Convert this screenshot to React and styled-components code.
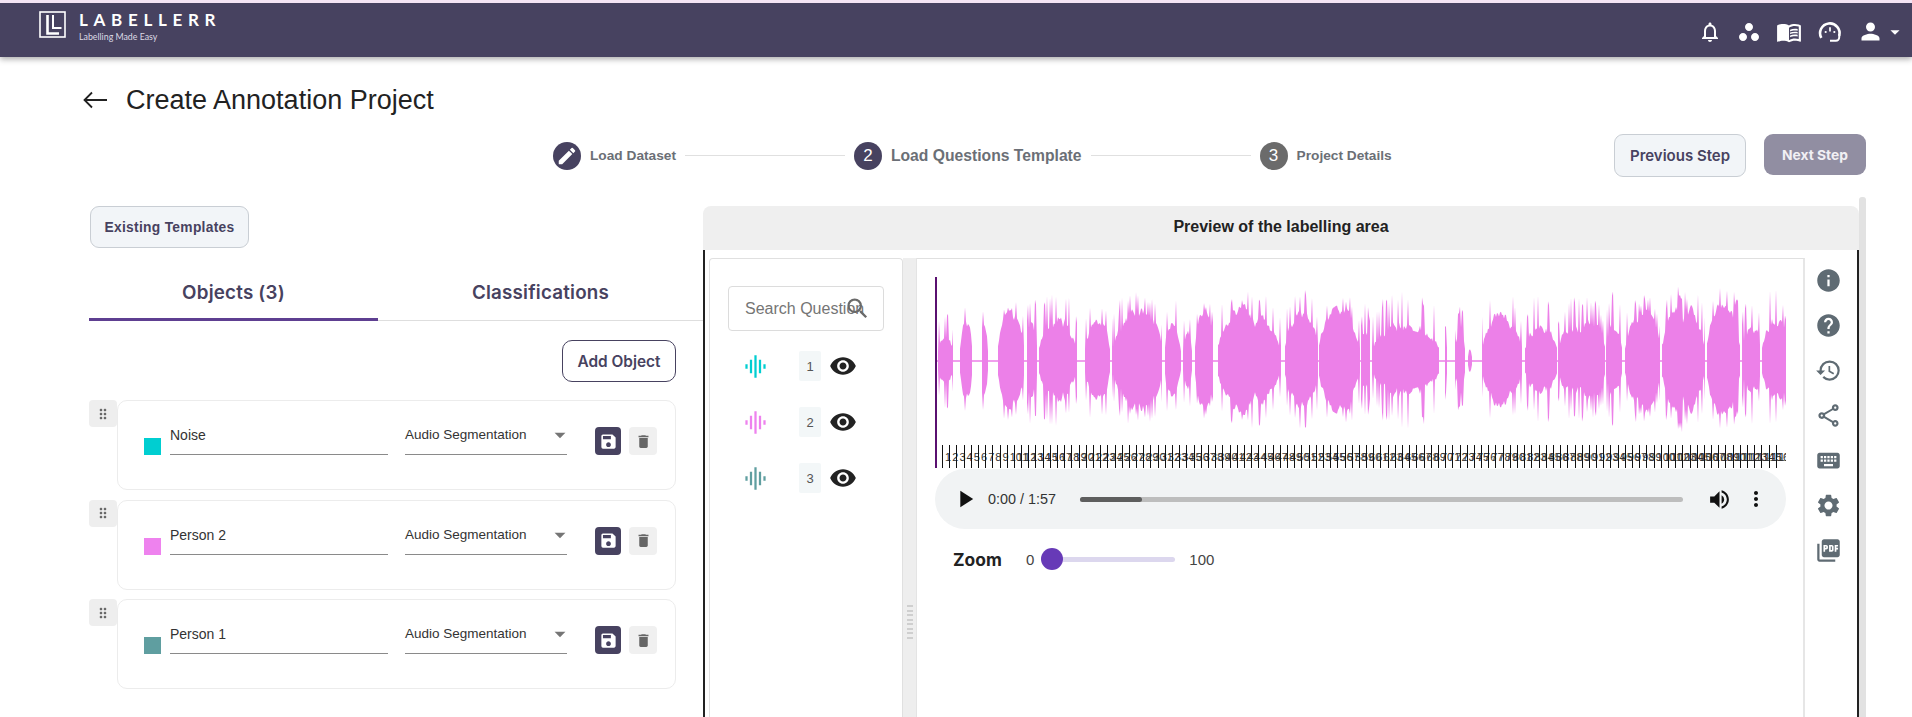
import React from 'react';
import styled, { createGlobalStyle } from 'styled-components';
import {
  MdArrowDropDown, MdDelete, MdDragIndicator, MdEdit, MdGraphicEq, MdHelp, MdHistory, MdInfo,
  MdKeyboard, MdMenuBook, MdMoreVert, MdNotificationsNone, MdPerson, MdPictureAsPdf, MdPlayArrow,
  MdSave, MdSearch, MdSettings, MdOutlineShare, MdVisibility, MdVolumeUp, MdWorkspaces
} from 'react-icons/md';

const OBJECTS = [
  { id: 1, name: 'Noise', color: '#00CED1' },
  { id: 2, name: 'Person 2', color: '#EE82EE' },
  { id: 3, name: 'Person 1', color: '#5F9EA0' }
];

// absolute page x of each speech burst, with its peak height
const BURSTS = [
  [938, 953, 50], [960, 972, 52], [982, 988, 60], [998, 1024, 62], [1027, 1037, 66], [1039, 1077, 68],
  [1085, 1110, 62], [1112, 1162, 66], [1165, 1181, 62], [1183, 1192, 50], [1195, 1213, 62], [1218, 1281, 70],
  [1285, 1318, 72], [1319, 1360, 68], [1361, 1370, 60], [1372, 1439, 68], [1445, 1447, 62], [1455, 1465, 54],
  [1468, 1472, 18], [1482, 1522, 68], [1525, 1557, 64], [1558, 1605, 64], [1606, 1622, 68], [1625, 1660, 64],
  [1662, 1705, 72], [1707, 1740, 74], [1742, 1760, 64], [1762, 1786, 70]
];

const WAVE_LEFT = 935;
const WAVE_WIDTH = 851;
const WAVE_MID = 84;

function buildWave() {
  let seed = 11;
  const rand = () => {
    seed = (seed * 16807) % 2147483647;
    return seed / 2147483647;
  };
  let d = `M0 ${WAVE_MID - 0.7}H${WAVE_WIDTH}V${WAVE_MID + 0.7}H0Z`;
  BURSTS.forEach(([from, to, peak]) => {
    const top = [];
    const bottom = [];
    let body = 0.6;
    for (let x = from; x <= to; x += 1) {
      const t = (x - from) / Math.max(to - from, 1);
      const edge = Math.min(Math.max(Math.sin(Math.PI * t), 0.05), 1);
      // slow wander for the solid body, narrow spikes on top of it
      body = Math.min(0.82, Math.max(0.45, body + (rand() - 0.5) * 0.16));
      const spike = rand() < 0.24;
      const up = spike ? peak * (0.85 + rand() * 0.2) * Math.pow(edge, 0.15) : peak * body * Math.pow(edge, 0.35);
      const down = spike ? peak * (0.8 + rand() * 0.2) * Math.pow(edge, 0.15) : peak * (body - 0.04) * Math.pow(edge, 0.35);
      top.push(`${x - WAVE_LEFT} ${(WAVE_MID - up).toFixed(1)}`);
      bottom.unshift(`${x - WAVE_LEFT} ${(WAVE_MID + down).toFixed(1)}`);
    }
    d += `M${top.join('L')}L${bottom.join('L')}Z`;
  });
  return d;
}

const WAVE_PATH = buildWave();
const SECONDS = Array.from({ length: 117 }, (_, i) => i + 1);

function LogoMark() {
  return (
    <svg width="27" height="27" viewBox="0 0 27 27" fill="none" stroke="#fff">
      <rect x="1" y="1" width="25" height="25" strokeWidth="1.6" />
      <path d="M8.5 4v18.5H20" strokeWidth="2.6" />
      <path d="M14 4v13h8.5" strokeWidth="2" />
    </svg>
  );
}

function GaugeIcon() {
  return (
    <svg width="26" height="26" viewBox="0 0 24 24" fill="none" stroke="#fff">
      <path d="M4 17.5A9 9 0 1 1 20.5 15.5" strokeWidth="2.4" />
      <path d="M20.5 14v3a3 3 0 0 1-3 3H12" strokeWidth="1.8" />
      <circle cx="8" cy="12" r="1" fill="#fff" stroke="none" />
      <circle cx="16" cy="12" r="1" fill="#fff" stroke="none" />
      <path d="M12 7.5v4" strokeWidth="1.6" />
    </svg>
  );
}

function BackArrow() {
  return (
    <svg width="24" height="18" viewBox="0 0 24 18" fill="none" stroke="#222" strokeWidth="1.8">
      <path d="M1 9h23M9 1.5 1.5 9 9 16.5" />
    </svg>
  );
}

function ObjectRow({ item }) {
  return (
    <ObjectItem>
      <DragBox><MdDragIndicator size={16} /></DragBox>
      <ObjectCard>
        <Swatch $color={item.color} />
        <NameField>{item.name}</NameField>
        <TypeField>
          <span>Audio Segmentation</span>
          <MdArrowDropDown size={26} />
        </TypeField>
        <SaveBtn><MdSave size={19} /></SaveBtn>
        <DeleteBtn><MdDelete size={17} /></DeleteBtn>
      </ObjectCard>
    </ObjectItem>
  );
}

export default function App() {
  return (
    <>
      <GlobalStyle />
      <TopBar>
        <Brand>
          <LogoMark />
          <BrandText>
            <BrandName>LABELLERR</BrandName>
            <BrandTag>Labelling Made Easy</BrandTag>
          </BrandText>
        </Brand>
        <TopActions>
          <MdNotificationsNone size={24} />
          <MdWorkspaces size={24} />
          <MdMenuBook size={26} />
          <GaugeIcon />
          <UserMenu>
            <MdPerson size={27} />
            <MdArrowDropDown size={22} />
          </UserMenu>
        </TopActions>
      </TopBar>

      <TitleRow>
        <BackArrow />
        <Title>Create Annotation Project</Title>
      </TitleRow>

      <StepRow>
        <Stepper>
          <StepCircle><MdEdit size={22} /></StepCircle>
          <StepLabel $size={13.7}>Load Dataset</StepLabel>
          <StepLine />
          <StepCircle>2</StepCircle>
          <StepLabel $size={15.7}>Load Questions Template</StepLabel>
          <StepLine />
          <StepCircle $muted>3</StepCircle>
          <StepLabel $size={13.7}>Project Details</StepLabel>
        </Stepper>
        <StepButtons>
          <PrevBtn>Previous Step</PrevBtn>
          <NextBtn>Next Step</NextBtn>
        </StepButtons>
      </StepRow>

      <Workspace>
        <LeftColumn>
          <TemplatesBtn>Existing Templates</TemplatesBtn>
          <Tabs>
            <Tab $active>Objects (3)</Tab>
            <Tab>Classifications</Tab>
          </Tabs>
          <AddRow>
            <AddBtn>Add Object</AddBtn>
          </AddRow>
          <ObjectList>
            {OBJECTS.map(o => <ObjectRow key={o.id} item={o} />)}
          </ObjectList>
        </LeftColumn>

        <Preview>
          <PreviewHead>Preview of the labelling area</PreviewHead>
          <PreviewBody>
            <QuestionPanel>
              <SearchBox>
                <SearchText>Search Question</SearchText>
                <SearchIcon size={27} />
              </SearchBox>
              <QuestionList>
                {OBJECTS.map(o => (
                  <QuestionRow key={o.id}>
                    <MdGraphicEq size={27} color={o.color} />
                    <QuestionNum>{o.id}</QuestionNum>
                    <MdVisibility size={28} color="#222" />
                  </QuestionRow>
                ))}
              </QuestionList>
            </QuestionPanel>

            <Gutter>
              {Array.from({ length: 8 }, (_, i) => <GripBar key={i} />)}
            </Gutter>

            <AudioPanel>
              <WaveArea>
                <Cursor />
                <WaveSvg width={WAVE_WIDTH} height="168" viewBox={`0 0 ${WAVE_WIDTH} 168`}>
                  <path d={WAVE_PATH} fill="#EC80E8" />
                </WaveSvg>
                <Timeline>
                  {SECONDS.map(s => (
                    <Tick key={s}><TickNum>{s}</TickNum></Tick>
                  ))}
                </Timeline>
              </WaveArea>
              <Player>
                <MdPlayArrow size={28} color="#111" />
                <PlayerTime>0:00 / 1:57</PlayerTime>
                <PlayerTrack><PlayerFill /></PlayerTrack>
                <PlayerVolume size={25} />
                <MdMoreVert size={24} color="#111" />
              </Player>
              <ZoomRow>
                <ZoomLabel>Zoom</ZoomLabel>
                <ZoomValue>0</ZoomValue>
                <Slider>
                  <Thumb />
                  <SliderTrack />
                </Slider>
                <ZoomValue>100</ZoomValue>
              </ZoomRow>
            </AudioPanel>

            <SideTools>
              <MdInfo size={27} />
              <MdHelp size={27} />
              <MdHistory size={27} />
              <MdOutlineShare size={27} />
              <MdKeyboard size={27} />
              <MdSettings size={27} />
              <MdPictureAsPdf size={27} />
            </SideTools>
          </PreviewBody>
        </Preview>
        <ScrollThumb />
      </Workspace>
    </>
  );
}

const GlobalStyle = createGlobalStyle`
  html, body {
    margin: 0;
    height: 717px;
    overflow: hidden;
    background: #fff;
    font-family: "Liberation Sans", Arial, sans-serif;
    color: #222;
  }
  * { box-sizing: border-box; }
`;

const TopBar = styled.header`
  height: 57px;
  border-top: 3px solid #f4e4f4;
  background: #474260;
  box-shadow: 0 2px 6px rgba(0, 0, 0, 0.35);
  display: flex;
  justify-content: space-between;
  color: #fff;
  padding: 8px 6px 0 39px;
`;

const Brand = styled.div`
  display: flex;
  gap: 13px;
`;

const BrandText = styled.div`
  display: flex;
  flex-direction: column;
`;

const BrandName = styled.span`
  font-family: Lato, sans-serif;
  font-size: 17px;
  font-weight: 700;
  letter-spacing: 5.7px;
  line-height: 17px;
`;

const BrandTag = styled.span`
  font-family: Lato, sans-serif;
  font-size: 8.8px;
  line-height: 12px;
  margin-top: 3px;
  color: #dcdae4;
`;

const TopActions = styled.div`
  display: flex;
  align-items: center;
  gap: 15px;
  height: 41px;
`;

const UserMenu = styled.div`
  display: flex;
  align-items: center;
  margin-left: -1px;
`;

const TitleRow = styled.div`
  display: flex;
  align-items: center;
  gap: 19px;
  height: 34px;
  margin-top: 26px;
  padding-left: 83px;
`;

const Title = styled.h1`
  margin: 0;
  font-size: 27px;
  font-weight: 400;
  color: #222;
`;

const StepRow = styled.div`
  display: flex;
  justify-content: space-between;
  height: 43px;
  margin-top: 17px;
  padding: 0 46px 0 553px;
`;

const Stepper = styled.div`
  display: flex;
  align-items: center;
`;

const StepCircle = styled.div`
  width: 28px;
  height: 28px;
  border-radius: 50%;
  background: ${p => p.$muted ? '#6b6b6b' : '#474260'};
  color: #fff;
  display: flex;
  align-items: center;
  justify-content: center;
  font-size: 17px;
`;

const StepLabel = styled.span`
  margin-left: 9px;
  font-size: ${p => p.$size}px;
  font-weight: 700;
  color: #6b6f76;
  white-space: nowrap;
`;

const StepLine = styled.div`
  width: 160px;
  height: 1px;
  background: #e0e0e0;
  margin: 0 9px;
`;

const StepButtons = styled.div`
  display: flex;
  align-items: flex-start;
  gap: 18px;
`;

const PrevBtn = styled.button`
  width: 132px;
  height: 43px;
  border: 1px solid #c9ced4;
  border-radius: 9px;
  background: #f2f5f8;
  color: #474260;
  font-family: Inter, sans-serif;
  font-size: 15px;
  font-weight: 600;
  padding: 0;
`;

const NextBtn = styled.button`
  width: 102px;
  height: 41px;
  border: 0;
  border-radius: 9px;
  background: #918ea2;
  color: #f1f0f4;
  font-family: Inter, sans-serif;
  font-size: 13.8px;
  font-weight: 700;
  padding: 0;
`;

const Workspace = styled.main`
  display: flex;
  align-items: flex-start;
  margin-top: 29px;
  padding-left: 89px;
`;

const LeftColumn = styled.section`
  width: 614px;
  flex: none;
`;

const TemplatesBtn = styled.button`
  display: block;
  width: 159px;
  height: 42px;
  margin-left: 1px;
  border: 1px solid #c9ced4;
  border-radius: 9px;
  background: #f2f5f8;
  color: #474260;
  font-family: "Liberation Sans", sans-serif;
  font-size: 13.8px;
  font-weight: 700;
  letter-spacing: 0.3px;
  padding: 0;
`;

const Tabs = styled.div`
  display: grid;
  grid-template-columns: 289px 325px;
  height: 73px;
  border-bottom: 1px solid #dedede;
`;

const Tab = styled.div`
  display: flex;
  align-items: flex-end;
  justify-content: center;
  padding-bottom: 14px;
  margin-bottom: -1px;
  font-family: Inter, sans-serif;
  font-size: 18.8px;
  font-weight: 600;
  letter-spacing: 0.2px;
  color: #474260;
  border-bottom: 3px solid ${p => p.$active ? '#5e3f91' : 'transparent'};
`;

const AddRow = styled.div`
  display: flex;
  justify-content: flex-end;
  padding: 19px 27px 0 0;
`;

const AddBtn = styled.button`
  width: 114px;
  height: 42px;
  border: 1px solid #474260;
  border-radius: 10px;
  background: #fff;
  color: #474260;
  font-family: Inter, sans-serif;
  font-size: 15.4px;
  font-weight: 600;
  padding: 0;
`;

const ObjectList = styled.div`
  display: flex;
  flex-direction: column;
  gap: 9.5px;
  margin-top: 18px;
`;

const ObjectItem = styled.div`
  display: flex;
  align-items: flex-start;
`;

const DragBox = styled.div`
  width: 28px;
  height: 27px;
  flex: none;
  background: #eeeeee;
  border-radius: 4px;
  color: #666;
  display: flex;
  align-items: center;
  justify-content: center;
`;

const ObjectCard = styled.div`
  width: 559px;
  height: 90px;
  border: 1px solid #ececec;
  border-radius: 10px;
  padding: 26px 0 0 26px;
  display: flex;
  align-items: flex-start;
`;

const Swatch = styled.div`
  width: 17px;
  height: 17px;
  margin-top: 11px;
  background: ${p => p.$color};
`;

const NameField = styled.div`
  width: 218px;
  height: 28px;
  margin-left: 9px;
  border-bottom: 1px solid #8a8a8a;
  font-size: 14px;
  line-height: 16px;
  color: #333;
`;

const TypeField = styled.div`
  width: 162px;
  height: 28px;
  margin-left: 17px;
  border-bottom: 1px solid #8a8a8a;
  font-size: 13.5px;
  line-height: 16px;
  color: #333;
  display: flex;
  justify-content: space-between;

  svg {
    margin: -5px -6px 0 0;
    color: #757575;
  }
`;

const SaveBtn = styled.div`
  width: 26px;
  height: 28px;
  margin-left: 28px;
  border-radius: 4px;
  background: #474260;
  color: #fff;
  display: flex;
  align-items: center;
  justify-content: center;
`;

const DeleteBtn = styled.div`
  width: 28px;
  height: 28px;
  margin-left: 8px;
  border-radius: 4px;
  background: #f0f0f0;
  color: #666;
  display: flex;
  align-items: center;
  justify-content: center;
`;

const Preview = styled.section`
  width: 1156px;
  flex: none;
`;

const PreviewHead = styled.div`
  height: 44px;
  padding-bottom: 2px;
  border-radius: 8px 8px 0 0;
  background: #efefef;
  display: flex;
  align-items: center;
  justify-content: center;
  font-size: 16px;
  font-weight: 700;
  color: #222;
`;

const PreviewBody = styled.div`
  display: flex;
  height: 467px;
  padding: 8px 0 0 4px;
  border-left: 2px solid #222;
  border-right: 2px solid #222;
`;

const QuestionPanel = styled.div`
  width: 194px;
  flex: none;
  border: 1px solid #e0e0e0;
  border-bottom: 0;
  border-radius: 4px 4px 0 0;
  padding: 27px 18px 0;
`;

const SearchBox = styled.div`
  height: 45px;
  border: 1px solid #dcdcdc;
  border-radius: 4px;
  display: flex;
  align-items: center;
  overflow: hidden;
  padding-left: 16px;
`;

const SearchText = styled.span`
  font-size: 16px;
  color: #757575;
  white-space: nowrap;
  width: 110px;
  flex: none;
`;

const SearchIcon = styled(MdSearch)`
  flex: none;
  margin-left: -11px;
  color: #6a6a6a;
`;

const QuestionList = styled.div`
  display: flex;
  flex-direction: column;
  gap: 26px;
  margin-top: 20px;
`;

const QuestionRow = styled.div`
  display: flex;
  align-items: center;
  height: 30px;
  padding-left: 14px;

  > svg:first-child { margin-right: 30px; }
  > svg:last-child { margin-left: 8px; }
`;

const QuestionNum = styled.div`
  width: 22px;
  height: 30px;
  background: #f3f7f8;
  border-radius: 2px;
  font-size: 13px;
  color: #555;
  display: flex;
  align-items: center;
  justify-content: center;
`;

const Gutter = styled.div`
  width: 14px;
  flex: none;
  background: #eeeeee;
  border-right: 1px solid #e4e4e4;
  display: flex;
  flex-direction: column;
  align-items: center;
  gap: 2.5px;
  padding-top: 347px;
`;

const GripBar = styled.div`
  width: 6px;
  height: 2px;
  background: #cfcfcf;
`;

const AudioPanel = styled.div`
  width: 888px;
  flex: none;
  border-top: 1px solid #e0e0e0;
  border-right: 2px solid #e6e6e6;
  padding: 18px 0 0 18px;
`;

const WaveArea = styled.div`
  position: relative;
  width: ${WAVE_WIDTH}px;
`;

const Cursor = styled.div`
  position: absolute;
  left: 0;
  top: 0;
  width: 1.5px;
  height: 191px;
  background: #5a1070;
`;

const WaveSvg = styled.svg`
  display: block;
`;

const Timeline = styled.div`
  display: flex;
  height: 23px;
  padding-left: 7px;
  overflow: hidden;
`;

const Tick = styled.div`
  width: 7.2px;
  flex: none;
  border-left: 1px solid #111;
  white-space: nowrap;
  padding: 6px 0 0 2px;
`;

const TickNum = styled.span`
  display: block;
  font-size: 11px;
  line-height: 12px;
  color: #333;
`;

const Player = styled.div`
  display: flex;
  align-items: center;
  width: ${WAVE_WIDTH}px;
  height: 60px;
  margin-top: 1px;
  padding: 0 18px 0 16px;
  border-radius: 30px;
  background: #f1f3f4;
`;

const PlayerTime = styled.span`
  margin-left: 9px;
  font-size: 14.4px;
  color: #333;
  white-space: nowrap;
`;

const PlayerTrack = styled.div`
  flex: 1;
  height: 5px;
  margin-left: 24px;
  border-radius: 3px;
  background: #bdbdbd;
`;

const PlayerFill = styled.div`
  width: 62px;
  height: 100%;
  border-radius: 3px;
  background: #5e5e5e;
`;

const PlayerVolume = styled(MdVolumeUp)`
  margin: 0 12px 0 24px;
  color: #111;
`;

const ZoomRow = styled.div`
  display: flex;
  align-items: center;
  height: 22px;
  margin-top: 19px;
  padding-left: 18px;
`;

const ZoomLabel = styled.span`
  width: 73px;
  font-family: Inter, sans-serif;
  font-size: 17.4px;
  font-weight: 700;
  color: #222;
`;

const ZoomValue = styled.span`
  font-size: 15px;
  color: #444;
`;

const Slider = styled.div`
  width: 134px;
  margin: 0 14px 0 7px;
  display: flex;
  align-items: center;
`;

const Thumb = styled.div`
  width: 22px;
  height: 22px;
  flex: none;
  border-radius: 50%;
  background: #673ab7;
`;

const SliderTrack = styled.div`
  flex: 1;
  height: 5px;
  border-radius: 0 3px 3px 0;
  background: #dcd7ee;
`;

const SideTools = styled.div`
  flex: 1;
  display: flex;
  flex-direction: column;
  align-items: center;
  gap: 18px;
  padding: 9px 6px 0 0;
  color: #5f6b73;
`;

const ScrollThumb = styled.div`
  width: 7px;
  height: 520px;
  flex: none;
  margin-top: -9px;
  border-radius: 3px 3px 0 0;
  background: #e2e2e2;
`;
